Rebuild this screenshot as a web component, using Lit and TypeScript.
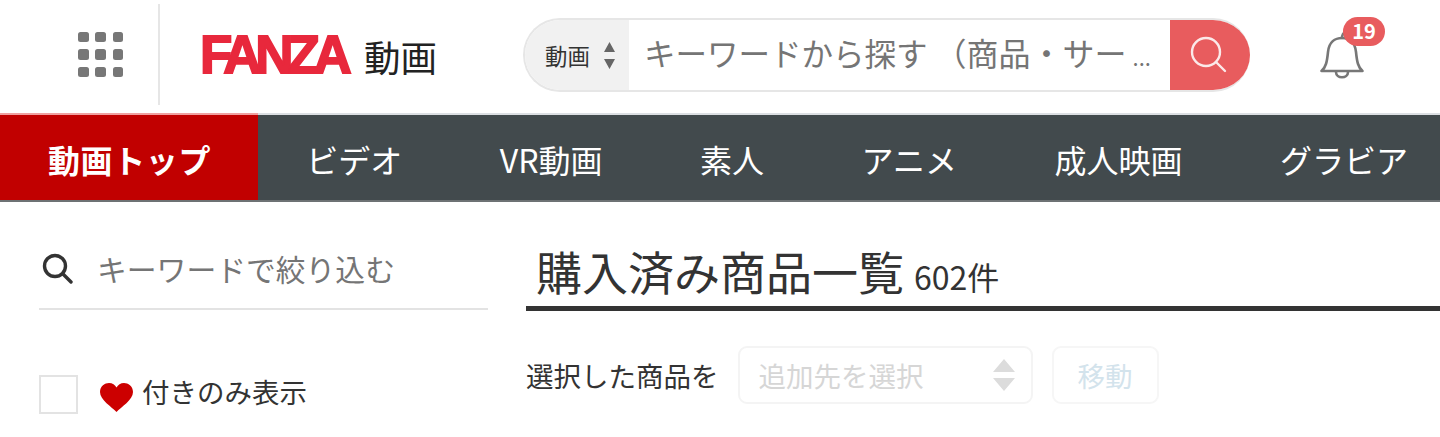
import { LitElement, html, css } from "lit";
import { customElement } from "lit/decorators.js";

const NAV = ["ビデオ", "VR動画", "素人", "アニメ", "成人映画", "グラビア"];

@customElement("app-root")
export class AppRoot extends LitElement {
  static styles = css`
    :host {
      display: block;
      height: 437px;
      overflow: hidden;
      background: #fff;
      color: #333;
      font-family: "Noto Sans CJK JP", "Noto Sans", sans-serif;
    }
    * { box-sizing: border-box; }
    .header {
      height: 115px;
      display: flex;
      align-items: center;
      position: relative;
      border-bottom: 2px solid #dcdfe3;
    }
    .header::after {
      content: "";
      position: absolute;
      left: 0; bottom: -2px;
      width: 258px; height: 2px;
      background: #f0a0a0;
    }
    .menu {
      width: 160px;
      height: 101px;
      margin-top: -4px;
      border-right: 2px solid #e6e6e6;
      display: flex;
      align-items: center;
      padding-left: 78px;
      flex: none;
    }
    .dots {
      display: grid;
      grid-template-columns: repeat(3, 10.5px);
      gap: 6.8px;
    }
    .dots i { height: 10.5px; border-radius: 2.5px; background: #777; display: block; }
    .brand {
      width: 363px;
      flex: none;
      display: flex;
      align-items: center;
      padding-left: 42px;
    }
    .logo {
      width: 150px;
      margin: -3px 12px 0 -2px;
      flex: none;
      display: block;
      font-family: "Liberation Sans", sans-serif;
      font-weight: 700;
      font-size: 53px;
      line-height: 46px;
      letter-spacing: -6.2px;
      color: #e8283c;
      -webkit-text-stroke: 1.8px #e8283c;
      white-space: nowrap;
    }
    .service { font-size: 36.5px; line-height: 40px; color: #222; font-weight: 400; margin-left: 2px; }
    .search {
      width: 727px;
      height: 74px;
      margin-top: -3px;
      display: flex;
      flex: none;
      border-radius: 37px;
      overflow: hidden;
      border: 2px solid #e6e6e6;
      border-right: 0;
    }
    .scope {
      width: 104px;
      flex: none;
      background: #f1f1f1;
      display: flex;
      align-items: center;
      padding-left: 20px;
      font-size: 22.4px;
      color: #333;
    }
    .updown { margin-left: 14px; display: block; }
    .query {
      flex: 1;
      min-width: 0;
      padding: 0 0 6px 15px;
      font-size: 31.5px;
      color: #757575;
      line-height: 64px;
      white-space: nowrap;
    }
    .query-rest { margin-left: 7px; font-size: 32px; }
    .query-dots { margin-left: 6px; font-size: 22px; }
    .go {
      width: 80px;
      flex: none;
      margin: -2px 0;
      background: #e85c5e;
      display: flex;
      align-items: center;
      justify-content: center;
      padding-right: 2px;
    }
    .bell-wrap {
      margin-left: 70px;
      margin-top: -5px;
      position: relative;
      width: 46px;
      height: 50px;
      flex: none;
    }
    .badge {
      position: absolute;
      left: 23px;
      top: -12px;
      width: 42px;
      height: 29px;
      border-radius: 15px;
      background: #e85c5e;
      color: #fff;
      font-size: 20px;
      font-weight: 700;
      line-height: 28px;
      text-align: center;
    }
    .nav {
      height: 87px;
      background: #424a4d;
      display: flex;
      align-items: stretch;
      border-bottom: 2px solid #6d7274;
      white-space: nowrap;
      overflow: hidden;
    }
    .nav a {
      padding: 0 48.75px;
      font-size: 32px;
      line-height: 89px;
      color: #fff;
      flex: none;
    }
    .nav a.on {
      background: #c10000;
      font-weight: 700;
      padding: 0 46.5px 0 48px;
      letter-spacing: 0.6px;
      margin-bottom: -2px;
    }
    .body {
      display: flex;
      padding-left: 39px;
    }
    .side { width: 449px; flex: none; margin-right: 38px; }
    .filter {
      height: 108px;
      border-bottom: 2px solid #e3e3e3;
      display: flex;
      align-items: center;
      padding: 26px 0 0 3px;
      font-size: 29.8px;
      color: #757575;
    }
    .filter svg { margin-right: 24px; display: block; }
    .fav {
      margin-top: 65px;
      display: flex;
      align-items: center;
      font-size: 27.5px;
      color: #333;
    }
    .box { width: 39px; height: 39px; border: 2px solid #e3e3e3; margin-right: 22px; flex: none; }
    .heart { margin: 5px 9px 0 0; display: block; flex: none; }
    .fav-label { margin-top: -8px; }
    .main { flex: 1; min-width: 0; }
    .title {
      margin: 0;
      height: 109px;
      border-bottom: 5px solid #333;
      padding: 35px 0 0 10px;
      display: flex;
      align-items: baseline;
      font-size: 46px;
      line-height: 66px;
      font-weight: 400;
      color: #333;
    }
    .count { font-size: 32px; margin-left: 10px; }
    .actions {
      margin-top: 35px;
      display: flex;
      align-items: center;
      font-size: 27.5px;
    }
    .select {
      margin-left: 19px;
      width: 295px;
      height: 58px;
      border: 2px solid #f4f4f4;
      border-radius: 9px;
      display: flex;
      align-items: center;
      justify-content: space-between;
      padding: 0 16px 0 19px;
      color: #d6d6d6;
    }
    .move {
      margin-left: 19px;
      width: 107px;
      height: 58px;
      border: 2px solid #f6f6f6;
      border-radius: 9px;
      display: flex;
      align-items: center;
      justify-content: center;
      color: #d3e3ec;
    }
  `;

  render() {
    return html`
      <div class="header">
        <div class="menu">
          <div class="dots">${Array.from({ length: 9 }, () => html`<i></i>`)}</div>
        </div>
        <div class="brand">
          <span class="logo">FANZA</span>
          <span class="service">動画</span>
        </div>
        <div class="search">
          <div class="scope">
            <span>動画</span>
            <svg class="updown" width="11" height="27" viewBox="0 0 11 27">
              <path d="M5.5 0 L11 10 H0 Z M0 17 H11 L5.5 27 Z" fill="#666" />
            </svg>
          </div>
          <div class="query">キーワードから探す<span class="query-rest">（商品・サー</span><span class="query-dots">...</span></div>
          <div class="go">
            <svg width="40" height="40" viewBox="0 0 40 40" fill="none" stroke="#fbe9e9" stroke-width="2.4" stroke-linecap="round">
              <circle cx="17" cy="17" r="14" />
              <path d="M27 27 L36 36" />
            </svg>
          </div>
        </div>
        <div class="bell-wrap">
          <svg width="46" height="50" viewBox="0 0 46 50" fill="none" stroke="#777" stroke-width="2.6" stroke-linecap="round" stroke-linejoin="round">
            <path d="M1.5 42 H42.5 C38 38 37 33 36 23 C35 13 29 9 22 9 C15 9 9 13 8 23 C7 33 6 38 1.5 42 Z" />
            <path d="M22 9 C22 6 23 4 26 2" />
            <path d="M16 43 C16 50 28 50 28 43" />
          </svg>
          <span class="badge">19</span>
        </div>
      </div>
      <nav class="nav">
        <a class="on">動画トップ</a>
        ${NAV.map((n) => html`<a>${n}</a>`)}
      </nav>
      <div class="body">
        <aside class="side">
          <div class="filter">
            <svg width="31" height="31" viewBox="0 0 31 31" fill="none" stroke="#333" stroke-width="3.4" stroke-linecap="round">
              <circle cx="13" cy="13" r="10.5" />
              <path d="M21 21 L29 29" />
            </svg>
            <span>キーワードで絞り込む</span>
          </div>
          <div class="fav">
            <span class="box"></span>
            <svg class="heart" width="33" height="29" viewBox="0 0 33 29">
              <path d="M16.5 29 C12 24 0 17 0 9 C0 3 5 0 9 0 C12.5 0 15 2 16.5 4.5 C18 2 20.5 0 24 0 C28 0 33 3 33 9 C33 17 21 24 16.5 29 Z" fill="#cc0000" />
            </svg>
            <span class="fav-label">付きのみ表示</span>
          </div>
        </aside>
        <main class="main">
          <h1 class="title">購入済み商品一覧<span class="count">602件</span></h1>
          <div class="actions">
            <span>選択した商品を</span>
            <div class="select">
              <span>追加先を選択</span>
              <svg width="22" height="32" viewBox="0 0 22 32">
                <path d="M11 0 L22 13 H0 Z M0 19 H22 L11 32 Z" fill="#dcdcdc" />
              </svg>
            </div>
            <div class="move">移動</div>
          </div>
        </main>
      </div>
    `;
  }
}
